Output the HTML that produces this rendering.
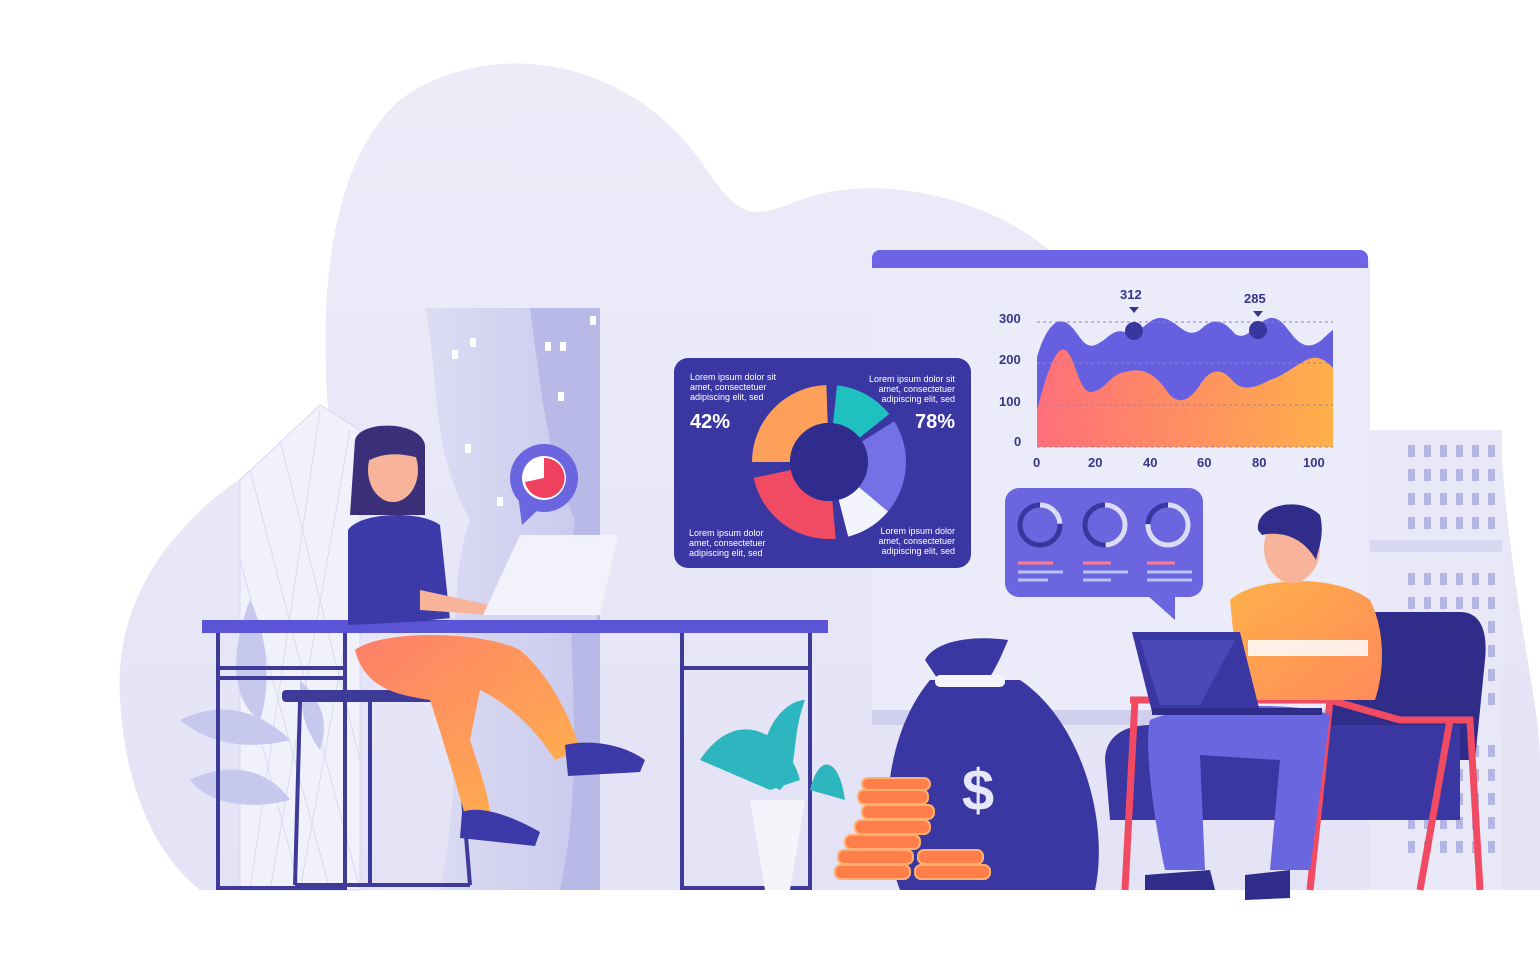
<!DOCTYPE html>
<html><head><meta charset="utf-8"><style>
html,body{margin:0;padding:0;background:#fff;width:1540px;height:980px;overflow:hidden}
svg{display:block}
text{font-family:"Liberation Sans",sans-serif}
</style></head><body>
<svg width="1540" height="980" viewBox="0 0 1540 980" xmlns="http://www.w3.org/2000/svg">
<defs>
<linearGradient id="bg" x1="0" y1="0" x2="0" y2="1"><stop offset="0" stop-color="#ececf9"/><stop offset="1" stop-color="#e4e3f6"/></linearGradient>
<linearGradient id="tower" x1="0" y1="0" x2="1" y2="0"><stop offset="0" stop-color="#dcdcf3"/><stop offset="1" stop-color="#c8c8ee"/></linearGradient>
<linearGradient id="orng" x1="0" y1="0" x2="1" y2="0"><stop offset="0" stop-color="#ff6e7a"/><stop offset="1" stop-color="#ffb04a"/></linearGradient>
<linearGradient id="pants" x1="0" y1="0" x2="1" y2="1"><stop offset="0" stop-color="#ff7e6a"/><stop offset="1" stop-color="#ffb54a"/></linearGradient>
<linearGradient id="shirt" x1="0" y1="0" x2="1" y2="1"><stop offset="0" stop-color="#ffb04a"/><stop offset="1" stop-color="#ff8a5a"/></linearGradient>
</defs>
<path d="M120,700 C110,560 230,470 330,430 C320,330 320,170 400,100 C480,40 620,50 700,160 C740,220 750,220 800,200 C880,170 1000,200 1060,260 L1370,260 L1370,430 L1500,430 C1510,600 1540,700 1540,760 L1540,890 L200,890 C150,850 125,780 120,700 Z" fill="url(#bg)"/>
<path d="M240,480 L320,405 L360,430 L360,890 L240,890 Z" fill="#f1f1fb" stroke="#d6d6f0"/>
<g stroke="#dadaf1" stroke-width="1">
<path d="M250,470 L360,890 M280,440 L360,760 M240,560 L330,890 M240,660 L300,890 M320,410 L250,890 M350,430 L270,890 M360,560 L300,890"/>
</g>
<path d="M425,308 L600,308 L600,890 L440,890 C470,750 440,600 470,520 C430,450 440,380 425,308 Z" fill="url(#tower)"/>
<path d="M530,308 L600,308 L600,890 L560,890 C590,750 560,620 575,520 C545,450 540,380 530,308 Z" fill="#b9b9e8"/>
<g fill="#fff"><rect x="452" y="350" width="6" height="9"/><rect x="470" y="338" width="6" height="9"/><rect x="545" y="342" width="6" height="9"/><rect x="560" y="342" width="6" height="9"/><rect x="590" y="316" width="6" height="9"/><rect x="558" y="392" width="6" height="9"/><rect x="465" y="444" width="6" height="9"/><rect x="497" y="497" width="6" height="9"/></g>
<rect x="1370" y="430" width="132" height="460" fill="#e8e8f7"/>
<g fill="#b5b5e3">
<g id="wr"><rect x="1408" y="445" width="7" height="12"/><rect x="1424" y="445" width="7" height="12"/><rect x="1440" y="445" width="7" height="12"/><rect x="1456" y="445" width="7" height="12"/><rect x="1472" y="445" width="7" height="12"/><rect x="1488" y="445" width="7" height="12"/></g>
<use href="#wr" y="24"/><use href="#wr" y="48"/><use href="#wr" y="72"/><use href="#wr" y="128"/><use href="#wr" y="152"/><use href="#wr" y="176"/><use href="#wr" y="200"/><use href="#wr" y="224"/><use href="#wr" y="248"/><use href="#wr" y="300"/><use href="#wr" y="324"/><use href="#wr" y="348"/><use href="#wr" y="372"/><use href="#wr" y="396"/>
</g>
<rect x="1370" y="540" width="132" height="12" fill="#d8d8f2"/>
<rect x="872" y="250" width="496" height="475" rx="8" fill="#ebebfa"/>
<rect x="872" y="250" width="496" height="18" rx="8" fill="#6c63e6"/>
<rect x="872" y="258" width="496" height="10" fill="#6c63e6"/>
<rect x="872" y="710" width="496" height="15" fill="#d0d0ee"/>
<g font-size="13" font-weight="bold" fill="#36358a">
<text x="999" y="323">300</text><text x="999" y="364">200</text><text x="999" y="406">100</text><text x="1014" y="446">0</text>
<text x="1033" y="467">0</text><text x="1088" y="467">20</text><text x="1143" y="467">40</text><text x="1197" y="467">60</text><text x="1252" y="467">80</text><text x="1303" y="467">100</text>
<text x="1120" y="299">312</text><text x="1244" y="303">285</text>
</g>
<path d="M1037,357 C1045,330 1055,318 1065,322 C1078,328 1082,350 1095,345 C1108,340 1112,328 1125,332 C1140,338 1148,316 1162,318 C1178,320 1185,340 1200,330 C1212,318 1222,318 1235,334 C1248,342 1255,322 1270,318 C1285,316 1290,340 1305,345 C1318,348 1325,335 1333,330 L1333,447 L1037,447 Z" fill="#6660e0"/>
<path d="M1037,410 C1045,380 1055,345 1065,350 C1075,355 1078,390 1090,392 C1105,392 1108,375 1125,372 C1150,365 1160,382 1170,395 C1180,405 1190,400 1200,385 C1210,368 1222,368 1232,380 C1242,392 1255,388 1270,380 C1290,374 1305,355 1318,358 C1326,360 1330,365 1333,368 L1333,447 L1037,447 Z" fill="url(#orng)"/>
<g stroke="#8a85c8" stroke-dasharray="3,3" fill="none"><path d="M1037,322H1333M1037,363H1333M1037,405H1333M1037,447H1333"/></g>
<circle cx="1134" cy="331" r="9" fill="#3a36a0"/><circle cx="1258" cy="330" r="9" fill="#3a36a0"/>
<path d="M1129,307 L1139,307 L1134,313Z M1253,311 L1263,311 L1258,317Z" fill="#36358a"/>
<rect x="674" y="358" width="297" height="210" rx="14" fill="#3a37a3"/>
<g font-size="9" fill="#fff">
<text x="690" y="380">Lorem ipsum dolor sit</text><text x="690" y="390">amet, consectetuer</text><text x="690" y="400">adipiscing elit, sed</text>
<text x="955" y="382" text-anchor="end">Lorem ipsum dolor sit</text><text x="955" y="392" text-anchor="end">amet, consectetuer</text><text x="955" y="402" text-anchor="end">adipiscing elit, sed</text>
<text x="689" y="536">Lorem ipsum dolor</text><text x="689" y="546">amet, consectetuer</text><text x="689" y="556">adipiscing elit, sed</text>
<text x="955" y="534" text-anchor="end">Lorem ipsum dolor</text><text x="955" y="544" text-anchor="end">amet, consectetuer</text><text x="955" y="554" text-anchor="end">adipiscing elit, sed</text>
</g>
<text x="690" y="428" font-size="20" font-weight="bold" fill="#fff">42%</text>
<text x="955" y="428" font-size="20" font-weight="bold" fill="#fff" text-anchor="end">78%</text>
<g fill="none" stroke-width="38">
<circle cx="829" cy="462" r="58" stroke="#ffa05a" stroke-dasharray="89 400" transform="rotate(180 829 462)"/>
<circle cx="829" cy="462" r="58" stroke="#1fc0c0" stroke-dasharray="46 400" transform="rotate(276 829 462)"/>
<circle cx="829" cy="462" r="58" stroke="#7470e6" stroke-dasharray="102 400" transform="rotate(328 829 462)"/>
<circle cx="829" cy="462" r="58" stroke="#f4f4fc" stroke-dasharray="36 400" transform="rotate(40 829 462)"/>
<circle cx="829" cy="462" r="58" stroke="#f04b62" stroke-dasharray="84 400" transform="rotate(85 829 462)"/>
</g>
<circle cx="829" cy="462" r="39" fill="#2f2c8e"/>
<rect x="1005" y="488" width="198" height="109" rx="14" fill="#6b66e0"/>
<path d="M1148,596 L1175,596 L1175,620 Z" fill="#6b66e0"/>
<g fill="none" stroke-width="5">
<circle cx="1040" cy="525" r="20" stroke="#3a36a0"/><circle cx="1105" cy="525" r="20" stroke="#3a36a0"/><circle cx="1168" cy="525" r="20" stroke="#3a36a0"/>
<circle cx="1040" cy="525" r="20" stroke="#dcdcf8" stroke-dasharray="30 200" transform="rotate(-90 1040 525)"/>
<circle cx="1105" cy="525" r="20" stroke="#dcdcf8" stroke-dasharray="62 200" transform="rotate(-90 1105 525)"/>
<circle cx="1168" cy="525" r="20" stroke="#dcdcf8" stroke-dasharray="95 200" transform="rotate(-90 1168 525)"/>
</g>
<g stroke-width="3"><path d="M1018,563h35M1083,563h28M1147,563h28" stroke="#ff7a8a"/><path d="M1018,572h45M1083,572h45M1147,572h45M1018,580h30M1083,580h28M1147,580h45" stroke="#b8c0f8"/></g>
<circle cx="544" cy="478" r="34" fill="#6b66e0"/><path d="M518,495 L522,525 L540,508Z" fill="#6b66e0"/>
<circle cx="544" cy="478" r="22" fill="#fff"/><path d="M544,478 L544,458 A20,20 0 1 1 525,482 Z" fill="#ef4060"/>
<g fill="#c6c8ee"><path d="M250,600 C230,650 230,700 260,720 C270,690 270,640 250,600Z"/><path d="M180,720 C220,700 260,710 290,740 C250,750 210,745 180,720Z"/><path d="M190,780 C230,760 270,770 290,800 C250,810 210,805 190,780Z"/><path d="M300,680 C320,700 330,720 320,750 C305,730 300,710 300,680Z"/></g>
<rect x="202" y="620" width="626" height="13" fill="#5b54d6"/>
<g fill="none" stroke="#3d3a98" stroke-width="4">
<path d="M218,633 V888 H345 V633 M218,668 H345 M218,678H345"/>
<path d="M682,633 V888 H810 V633 M682,668 H810"/>
</g>
<rect x="282" y="690" width="190" height="12" rx="4" fill="#3d3a98"/>
<g fill="none" stroke="#3d3a98" stroke-width="4"><path d="M300,702 L295,885 M455,702 L470,885 M370,702 L370,885 M295,885 H470"/></g>
<path d="M355,440 C360,420 420,420 425,445 L425,515 L350,515 Z" fill="#3b2f7a"/>
<ellipse cx="393" cy="470" rx="25" ry="32" fill="#f7b49a"/>
<path d="M365,445 C375,428 420,430 425,460 C410,455 390,450 370,460Z" fill="#3b2f7a"/>
<path d="M348,530 C360,512 420,510 440,525 L450,620 L348,625 Z" fill="#3b3aa8"/>
<path d="M420,590 L490,605 L490,615 L420,610Z" fill="#f7b49a"/>
<path d="M355,650 C380,630 480,630 520,650 C555,680 575,730 580,750 L555,760 C530,720 500,700 480,690 L470,740 C480,770 490,800 490,815 L465,815 C455,780 440,730 430,700 C400,695 365,690 355,650Z" fill="url(#pants)"/>
<path d="M565,745 C585,740 620,742 645,760 L640,772 L568,776Z" fill="#3b3aa8"/>
<path d="M462,812 C480,805 510,815 540,832 L535,846 L460,838Z" fill="#3b3aa8"/>
<path d="M483,615 L520,535 L618,535 L600,615Z" fill="#f2f2fb"/>
<path d="M483,615 L598,615 L596,620 L430,620Z" fill="#d6d6f0"/>
<path d="M700,760 C740,700 790,740 800,780 L770,790 Z M760,780 C760,720 790,700 805,700 C790,740 800,770 780,790Z M810,790 C820,750 840,760 845,800Z" fill="#2eb6c0"/>
<path d="M750,800 H805 L790,890 H765 Z" fill="#f4f4fb"/>
<path d="M930,680 C880,740 880,840 900,890 L1095,890 C1110,820 1080,720 1020,680 Z" fill="#3a37a3"/>
<path d="M925,660 C935,640 975,635 1008,640 C1000,660 990,680 980,690 L945,690 Z" fill="#3a37a3"/>
<rect x="935" y="675" width="70" height="12" rx="5" fill="#f4f4fc"/>
<text x="978" y="810" font-size="58" font-weight="bold" fill="#e7e7fb" text-anchor="middle">$</text>
<g fill="#ff7e4a" stroke="#ffb070" stroke-width="2">
<rect x="835" y="865" width="75" height="14" rx="6"/><rect x="838" y="850" width="75" height="14" rx="6"/><rect x="845" y="835" width="75" height="14" rx="6"/><rect x="855" y="820" width="75" height="14" rx="6"/><rect x="862" y="805" width="72" height="14" rx="6"/><rect x="858" y="790" width="70" height="14" rx="6"/><rect x="862" y="778" width="68" height="12" rx="6"/>
<rect x="915" y="865" width="75" height="14" rx="6"/><rect x="918" y="850" width="65" height="14" rx="6"/>
</g>
<path d="M1330,612 L1460,612 C1480,612 1488,630 1485,660 L1475,760 L1330,760 Z" fill="#2f2c8a"/>
<path d="M1105,760 C1105,740 1120,725 1150,725 L1460,725 L1460,820 L1110,820 Z" fill="#3a37a3"/>
<g fill="none" stroke="#f04b62" stroke-width="7"><path d="M1130,700 H1330 L1400,720 L1470,720 L1480,890 M1135,700 L1125,890 M1330,700 L1310,890 M1450,720 L1420,890"/></g>
<path d="M1230,600 C1250,580 1330,570 1370,600 C1385,630 1385,670 1375,700 L1240,700 Z" fill="url(#shirt)"/>
<rect x="1248" y="640" width="120" height="16" fill="#fff" opacity=".85"/>
<ellipse cx="1292" cy="548" rx="28" ry="35" fill="#f7b49a"/>
<path d="M1258,530 C1255,505 1300,495 1320,515 C1325,535 1318,550 1316,560 C1305,540 1285,530 1262,535Z" fill="#2f2c8a"/>
<path d="M1150,720 C1180,705 1300,700 1330,715 L1310,870 L1270,870 L1280,760 L1200,755 L1205,870 L1165,870 C1150,800 1145,740 1150,720Z" fill="#6a66e0"/>
<path d="M1145,875 L1210,870 L1215,890 L1145,890Z M1245,875 L1290,870 L1290,898 L1245,900Z" fill="#2f2c8a"/>
<path d="M1132,632 L1240,632 L1260,712 L1152,712Z" fill="#3a37a3"/>
<path d="M1140,640 L1235,640 L1200,705 L1160,705Z" fill="#4b48b8"/>
<rect x="1152" y="708" width="170" height="7" fill="#2f2c8a"/>
</svg>
</body></html>
